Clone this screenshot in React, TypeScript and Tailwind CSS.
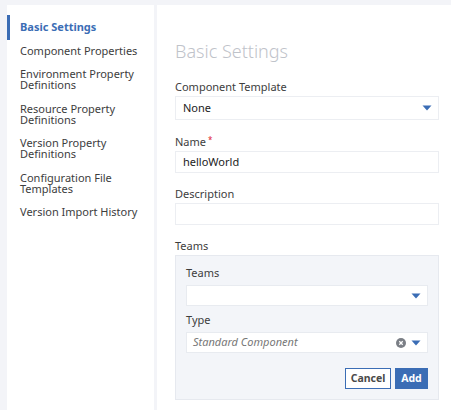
import React from "react";

const navItems = [
  "Basic Settings",
  "Component Properties",
  "Environment Property Definitions",
  "Resource Property Definitions",
  "Version Property Definitions",
  "Configuration File Templates",
  "Version Import History",
];

function Caret() {
  return (
    <svg width="10" height="6" viewBox="0 0 10 6" className="shrink-0">
      <path d="M0.5 0.5h9L5 5.5z" fill="#3b6db5" />
    </svg>
  );
}

function Label({ children, className = "" }: { children: React.ReactNode; className?: string }) {
  return <div className={`text-[11px] text-[#3d3d3d] h-[14px] leading-[14px] ${className}`}>{children}</div>;
}

export default function App() {
  return (
    <div
      className="w-[451px] h-[410px] bg-[#f3f4f8] pt-[5px] pl-[7px] flex overflow-hidden"
      style={{ fontFamily: "'Noto Sans', 'Open Sans', sans-serif" }}
    >
      {/* Sidebar */}
      <div className="w-[147px] bg-white pt-[16px] flex flex-col gap-[12.5px] shrink-0">
        {navItems.map((item, i) => (
          <div key={item} className="relative pl-[13px] pr-2">
            {i === 0 && <div className="absolute left-0 top-[-6px] w-[3px] h-[25px] bg-[#3b6db5]" />}
            <div
              className={`text-[11px] leading-[11px] ${
                i === 0 ? "font-bold text-[#3b6db5]" : "text-[#3d3d3d]"
              }`}
            >
              {item}
            </div>
          </div>
        ))}
      </div>

      {/* Content */}
      <div className="flex-1 ml-[3px] bg-white pl-[18px] pr-[12px] pt-[34px]">
        <div className="text-[18px] font-light text-[#bfc3ca] leading-[24px]">Basic Settings</div>

        <div className="mt-[17px]">
          <Label className="mb-[2px]">Component Template</Label>
          <div className="h-[24px] border border-[#eceef2] bg-white pl-[7px] pr-[6px] flex items-center justify-between text-[11px] text-[#222]">
            <span>None</span>
            <Caret />
          </div>

          <Label className="mt-[15px] mb-[2px]">
            Name<sup className="text-[#e0182d] text-[8px] ml-[2px] top-[-3px]">*</sup>
          </Label>
          <div className="h-[22px] border border-[#eceef2] bg-white px-[7px] flex items-center text-[11px] text-[#222]">
            helloWorld
          </div>

          <Label className="mt-[14px] mb-[2px]">Description</Label>
          <div className="h-[22px] border border-[#eceef2] bg-white" />

          <Label className="mt-[14px] mb-[2px]">Teams</Label>
          <div className="h-[145px] bg-[#f3f5f9] border border-[#e6e9ef] px-[10px] pt-[10px] flex flex-col">
            <Label className="mb-[5px]">Teams</Label>
            <div className="h-[21px] bg-white border border-[#e8ebf0] pr-[6px] flex items-center justify-end">
              <Caret />
            </div>
            <Label className="mt-[7px] mb-[5px]">Type</Label>
            <div className="h-[21px] bg-white border border-[#e8ebf0] pl-[6px] pr-[6px] flex items-center justify-between">
              <span className="text-[11px] italic text-[#777]">Standard Component</span>
              <div className="flex items-center gap-[5px]">
                <svg width="10" height="10" viewBox="0 0 10 10">
                  <circle cx="5" cy="5" r="5" fill="#7b7f86" />
                  <path d="M3.3 3.3l3.4 3.4M6.7 3.3l-3.4 3.4" stroke="#fff" strokeWidth="1.3" />
                </svg>
                <Caret />
              </div>
            </div>
            <div className="flex justify-end gap-[4px] mt-[15px]">
              <button className="h-[21px] w-[46px] border border-[#3b6db5] bg-white text-[10.5px] font-bold text-[#4a4a4a]">
                Cancel
              </button>
              <button className="h-[21px] w-[33px] bg-[#3b6db5] text-[10.5px] font-bold text-white">
                Add
              </button>
            </div>
          </div>
        </div>
      </div>
    </div>
  );
}
